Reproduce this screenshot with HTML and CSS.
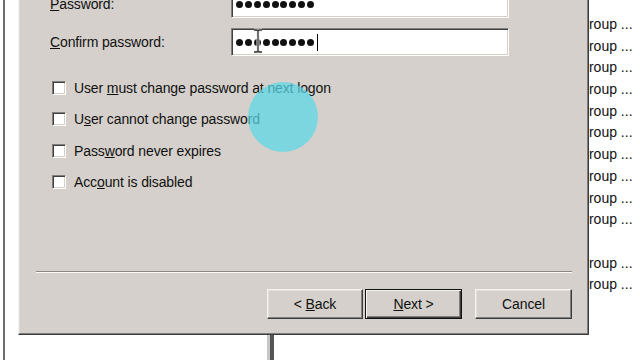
FILE: index.html
```html
<!DOCTYPE html>
<html>
<head>
<meta charset="utf-8">
<title>New Object - User</title>
<link rel="stylesheet" href="styles.css">
</head>
<body>
<div class="mmc">
  <div class="gutter"></div>
  <div class="list">
    <div class="col col-name"></div>
    <div class="col col-split"></div>
    <div class="col col-type"></div>
    <div class="col col-desc">
      <div class="cell">Security Group ...</div>
      <div class="cell">Security Group ...</div>
      <div class="cell">Security Group ...</div>
      <div class="cell">Security Group ...</div>
      <div class="cell">Security Group ...</div>
      <div class="cell">Security Group ...</div>
      <div class="cell">Security Group ...</div>
      <div class="cell">Security Group ...</div>
      <div class="cell">Security Group ...</div>
      <div class="cell">Security Group ...</div>
      <div class="cell"></div>
      <div class="cell">Security Group ...</div>
      <div class="cell">Security Group ...</div>
    </div>
  </div>
</div>

<div class="dialog">
  <div class="fields">
    <label class="lbl"><u>P</u>assword:</label>
    <div class="edit"><span class="dot"></span><span class="dot"></span><span class="dot"></span><span class="dot"></span><span class="dot"></span><span class="dot"></span><span class="dot"></span><span class="dot"></span><span class="dot"></span></div>
    <label class="lbl"><u>C</u>onfirm password:</label>
    <div class="edit"><span class="dot"></span><span class="dot"></span><span class="dot"></span><span class="dot"></span><span class="dot"></span><span class="dot"></span><span class="dot"></span><span class="dot"></span><span class="dot"></span><span class="caret"></span></div>
  </div>
  <div class="checks">
    <div class="check"><span class="box"></span><span>User <u>m</u>ust change password at next logon</span></div>
    <div class="check"><span class="box"></span><span>U<u>s</u>er cannot change password</span></div>
    <div class="check"><span class="box"></span><span>Pass<u>w</u>ord never expires</span></div>
    <div class="check"><span class="box"></span><span>Acc<u>o</u>unt is disabled</span></div>
  </div>
  <div class="footer">
    <div class="sep"></div>
    <div class="buttons">
      <button class="btn btn-back">&lt; <u>B</u>ack</button>
      <button class="btn btn-next"><u>N</u>ext &gt;</button>
      <button class="btn btn-cancel">Cancel</button>
    </div>
  </div>
</div>

<div class="spot"></div>
<svg class="ibeam" width="12" height="26" viewBox="0 0 12 26">
  <path d="M2 2h3l1 1 1-1h3M6 3v20M2 24h3l1-1 1 1h3" stroke="#e8e8e8" stroke-width="3" fill="none"/>
  <path d="M2 2h3l1 1 1-1h3M6 3v20M2 24h3l1-1 1 1h3" stroke="#333" stroke-width="1.3" fill="none"/>
</svg>
</body>
</html>
```
FILE: styles.css
```css
* { box-sizing: border-box; }
html, body {
  margin: 0;
  width: 640px;
  height: 360px;
  overflow: hidden;
  background: #fff;
}
body {
  position: relative;
  font-family: "Liberation Sans", Arial, sans-serif;
  font-size: 14px;
  color: #111;
}

/* background console window */
.mmc { display: flex; height: 360px; }
.gutter { width: 3px; }
.list {
  flex: 1;
  display: flex;
  border-left: 2px solid #6e6e6e;
}
.col-name { width: 262px; }
.col-split {
  width: 7px;
  border-left: 3px solid #c6c6c6;
  background: #555;
}
.col-type { width: 249.6px; }
.col-desc {
  flex: 1;
  padding-top: 14px;
  white-space: nowrap;
  overflow: hidden;
}
.cell { height: 21.7px; line-height: 21.7px; }

/* wizard dialog */
.dialog {
  position: absolute;
  left: 18px;
  top: -14px;
  width: 571px;
  height: 349px;
  background: #d5d0cb;
  border: 1px solid;
  border-color: #f4f2ef #3c3c3c #3c3c3c #f4f2ef;
  box-shadow: inset -1px -1px #7c7c7c, inset 1px 1px #dedbd6;
  display: flex;
  flex-direction: column;
  padding: 3px 16px 15px 17px;
  letter-spacing: -0.12px;
}
.fields {
  display: grid;
  grid-template-columns: 181px 278px;
  grid-auto-rows: 28px;
  row-gap: 10px;
  margin-left: 14px;
}
.lbl {
  display: flex;
  align-items: center;
}
.edit {
  display: flex;
  align-items: center;
  background: #fff;
  border: 1px solid;
  border-color: #808080 #fff #fff #808080;
  box-shadow: inset 1px 1px #404040, inset -1px -1px #d4d0c8;
  padding-left: 4px;
}
.dot {
  width: 7px;
  height: 7px;
  border-radius: 50%;
  background: #111;
  margin-right: 1.9px;
  flex: none;
}
.caret {
  width: 1px;
  height: 17px;
  background: #000;
  margin-left: 0.8px;
}

.checks {
  margin-top: 16.4px;
  margin-left: 16px;
}
.check {
  height: 31.3px;
  display: flex;
  align-items: center;
  gap: 8px;
}
.box {
  width: 14px;
  height: 14px;
  background: #fff;
  border: 1px solid;
  border-color: #808080 #fff #fff #808080;
  box-shadow: inset 1px 1px #404040, inset -1px -1px #d4d0c8;
  flex: none;
}

.footer { margin-top: auto; }
.sep {
  height: 2px;
  border-top: 1px solid #8a8784;
  border-bottom: 1px solid #fbfaf8;
}
.buttons {
  display: flex;
  justify-content: flex-end;
  margin-top: 16px;
}
.btn {
  height: 30px;
  width: 97px;
  font: inherit;
  letter-spacing: inherit;
  color: #111;
  background: #d5d0cb;
  border: 1px solid;
  border-color: #f6f4f1 #3c3c3c #3c3c3c #f6f4f1;
  box-shadow: inset -1px -1px #808080, inset 1px 1px #e4e1dc;
  padding: 0;
}
.btn-back { width: 96px; }
.btn-next {
  margin-left: 2px;
  border-color: #111;
  box-shadow: inset 1px 1px #f6f4f1, inset -1px -1px #3c3c3c, inset -2px -2px #808080;
}
.btn-cancel { margin-left: 13px; }

/* presenter click highlight and mouse pointer */
.spot {
  position: absolute;
  left: 248px;
  top: 82px;
  width: 70px;
  height: 70px;
  border-radius: 50%;
  background: rgba(90, 216, 232, 0.72);
}
.ibeam {
  position: absolute;
  left: 252px;
  top: 28px;
}
```
